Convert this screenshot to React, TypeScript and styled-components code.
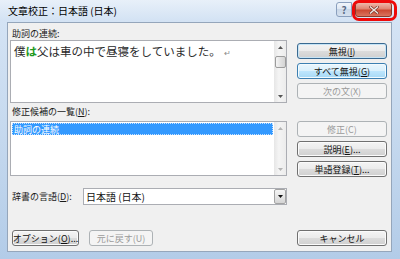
import React from 'react';
import styled, { createGlobalStyle, css } from 'styled-components';

const GlobalStyle = createGlobalStyle`
  html, body {
    margin: 0;
    padding: 0;
  }
  body {
    font-family: "Noto Sans CJK JP", "Noto Sans", sans-serif;
    background: #ffffff;
  }
`;

const Window = styled.div`
  width: 400px;
  height: 259px;
  box-sizing: border-box;
  display: flex;
  flex-direction: column;
  padding: 0 8px 7px 7px;
  background: linear-gradient(180deg, #e8f0f9 0px, #d4e3f4 20px, #c7daef 120px, #b3cce8 100%);
`;

const TitleBar = styled.div`
  position: relative;
  height: 22px;
  display: flex;
  align-items: flex-start;
`;

const Title = styled.div`
  font-size: 10px;
  line-height: 22px;
  color: #000;
  padding-left: 1px;
`;

const CaptionButtons = styled.div`
  margin-left: auto;
  margin-top: 2px;
  display: flex;
  gap: 3px;
`;

const CaptionButton = styled.div<{ $close?: boolean }>`
  height: 15px;
  box-sizing: border-box;
  display: flex;
  align-items: center;
  justify-content: center;
  ${({ $close }) =>
    $close
      ? css`
          width: 37px;
          border: 1px solid #8a3a2c;
          border-radius: 3px;
          background: linear-gradient(180deg, #eeb8ab 0%, #df8672 45%, #cc4a33 55%, #d9735e 100%);
        `
      : css`
          width: 16px;
          border: 1px solid #8a9fbd;
          border-radius: 3px 0 0 3px;
          background: linear-gradient(180deg, #f2f6fb 0%, #dce6f2 50%, #c9d7e8 50%, #d6e1ee 100%);
          font-size: 10px;
          font-weight: bold;
          color: #5a6b84;
        `}
`;

const Highlight = styled.div`
  position: absolute;
  left: 345px;
  top: 0;
  width: 45px;
  height: 21px;
  box-sizing: border-box;
  border: 3px solid #ee0a0a;
  border-radius: 7px;
`;

const Client = styled.div`
  flex: 1;
  display: flex;
  flex-direction: column;
  background: #f0f0f0;
  border: 1px solid #95a6bb;
  padding: 5px 4px 5px 2px;
`;

const Section = styled.div`
  display: grid;
  grid-template-columns: 277px 90px;
  column-gap: 10px;
`;

const Column = styled.div<{ $top?: number }>`
  display: flex;
  flex-direction: column;
  gap: 4px;
  padding-top: ${({ $top }) => $top ?? 0}px;
`;

const Stack = styled.div`
  display: flex;
  flex-direction: column;
`;

const Label = styled.div<{ $h: number }>`
  height: ${({ $h }) => $h}px;
  line-height: ${({ $h }) => $h}px;
  font-size: 9px;
  color: #1a1a1a;
  padding-left: 2px;
  white-space: nowrap;
`;

const Field = styled.div<{ $h: number }>`
  height: ${({ $h }) => $h}px;
  box-sizing: border-box;
  border: 1px solid #abadb3;
  background: #fff;
  display: flex;
`;

const FieldBody = styled.div`
  flex: 1;
  padding: 1px;
`;

const DocText = styled.div`
  font-size: 11.5px;
  line-height: 14px;
  color: #2a2a2a;
  padding: 2px 0 0 2px;
  white-space: nowrap;
`;

const Marked = styled.span`
  color: #1f9a1f;
  font-weight: bold;
`;

const ReturnMark = styled.span`
  color: #8a8a8a;
  font-size: 8px;
  margin-left: 3px;
`;

const ListItem = styled.div`
  height: 12px;
  line-height: 11px;
  font-size: 9px;
  color: #fff;
  background: #3399ff;
  padding-left: 1px;
  box-sizing: border-box;
  border: 1px dotted #c8e2ff;
`;

const ScrollBar = styled.div`
  width: 12px;
  display: flex;
  flex-direction: column;
  background: linear-gradient(90deg, #e6e6e6, #f4f4f4 40%, #ececec);
`;

const ScrollArrow = styled.div<{ $disabled?: boolean }>`
  height: 12px;
  display: flex;
  align-items: center;
  justify-content: center;
  color: ${({ $disabled }) => ($disabled ? '#b4b4b4' : '#555')};
`;

const ScrollTrack = styled.div`
  flex: 1;
  padding-top: 3px;
`;

const Thumb = styled.div`
  height: 12px;
  margin: 0 0 0 1px;
  box-sizing: border-box;
  border: 1px solid #9c9c9c;
  border-radius: 2px;
  background: linear-gradient(90deg, #f5f5f5, #e2e2e2 50%, #d4d4d4);
`;

type ButtonKind = 'normal' | 'default' | 'hot' | 'disabled';

const Button = styled.div<{ $kind?: ButtonKind; $w?: number }>`
  width: ${({ $w }) => ($w ? `${$w}px` : '100%')};
  height: 16px;
  box-sizing: border-box;
  border-radius: 3px;
  font-size: 9px;
  display: flex;
  align-items: center;
  justify-content: center;
  white-space: nowrap;
  color: #111;
  border: 1px solid #707070;
  background: linear-gradient(180deg, #f4f4f4 0%, #ebebeb 50%, #dcdcdc 50%, #d0d0d0 100%);
  box-shadow: inset 0 0 0 1px #fbfbfb;
  ${({ $kind }) =>
    $kind === 'default' &&
    css`
      border-color: #3a6a91;
      box-shadow: inset 0 0 0 1px #c6e4f6;
    `}
  ${({ $kind }) =>
    $kind === 'hot' &&
    css`
      border-color: #3c7fb1;
      background: linear-gradient(180deg, #eaf6fd 0%, #d9f0fc 50%, #bee6fd 50%, #a7d9f5 100%);
      box-shadow: inset 0 0 0 1px #f2fafe;
    `}
  ${({ $kind }) =>
    $kind === 'disabled' &&
    css`
      border-color: #adb2b5;
      background: #f4f4f4;
      box-shadow: none;
      color: #9a9a9a;
    `}
`;

const LangRow = styled.div`
  width: 277px;
  margin-top: 11px;
  display: flex;
  align-items: center;
`;

const Combo = styled.div`
  flex: 1;
  height: 17px;
  box-sizing: border-box;
  border: 1px solid #abadb3;
  background: #fff;
  display: flex;
  align-items: center;
`;

const ComboText = styled.div`
  flex: 1;
  font-size: 10px;
  color: #111;
  padding-left: 2px;
`;

const ComboButton = styled.div`
  width: 12px;
  height: 15px;
  box-sizing: border-box;
  border: 1px solid #a4a4a4;
  border-radius: 2px;
  background: linear-gradient(180deg, #f4f4f4 0%, #e6e6e6 50%, #d4d4d4 100%);
  display: flex;
  align-items: center;
  justify-content: center;
`;

const Footer = styled.div`
  margin-top: auto;
  display: flex;
  align-items: center;
  padding-left: 2px;
  gap: 10px;
`;

const Spacer = styled.div`
  flex: 1;
`;

const Arrow = ({ up, color = 'currentColor' }: { up?: boolean; color?: string }) => (
  <svg width="5" height="3" viewBox="0 0 5 3">
    <path d={up ? 'M0 3 L2.5 0 L5 3 Z' : 'M0 0 L5 0 L2.5 3 Z'} fill={color} />
  </svg>
);

const CloseGlyph = () => (
  <svg width="10" height="8" viewBox="0 0 10 8">
    <path d="M1.5 1 L8.5 7 M8.5 1 L1.5 7" stroke="#7a3326" strokeWidth="2.8" strokeLinecap="square" />
    <path d="M1.5 1 L8.5 7 M8.5 1 L1.5 7" stroke="#ece4e1" strokeWidth="1.5" strokeLinecap="square" />
  </svg>
);

const Scroll = ({ thumb, disabled }: { thumb?: boolean; disabled?: boolean }) => (
  <ScrollBar>
    <ScrollArrow $disabled={disabled}>
      <Arrow up />
    </ScrollArrow>
    <ScrollTrack>{thumb && <Thumb />}</ScrollTrack>
    <ScrollArrow $disabled={disabled}>
      <Arrow />
    </ScrollArrow>
  </ScrollBar>
);

export default function App() {
  return (
    <>
      <GlobalStyle />
      <Window>
        <TitleBar>
          <Title>文章校正：日本語 (日本)</Title>
          <CaptionButtons>
            <CaptionButton>?</CaptionButton>
            <CaptionButton $close>
              <CloseGlyph />
            </CaptionButton>
          </CaptionButtons>
          <Highlight />
        </TitleBar>
        <Client>
          <Section>
            <Stack>
              <Label $h={12}>助詞の連続:</Label>
              <Field $h={63}>
                <FieldBody>
                  <DocText>
                    僕<Marked>は</Marked>父は車の中で昼寝をしていました。
                    <ReturnMark>↵</ReturnMark>
                  </DocText>
                </FieldBody>
                <Scroll thumb />
              </Field>
            </Stack>
            <Column $top={15}>
              <Button $kind="default">
                無視(<u>I</u>)
              </Button>
              <Button $kind="hot">
                すべて無視(<u>G</u>)
              </Button>
              <Button $kind="disabled">次の文(X)</Button>
            </Column>
          </Section>
          <Section>
            <Stack>
              <Label $h={18}>
                修正候補の一覧(<u>N</u>):
              </Label>
              <Field $h={55}>
                <FieldBody>
                  <ListItem>助詞の連続</ListItem>
                </FieldBody>
                <Scroll disabled />
              </Field>
            </Stack>
            <Column $top={18}>
              <Button $kind="disabled">修正(C)</Button>
              <Button>
                説明(<u>E</u>)...
              </Button>
              <Button>
                単語登録(<u>T</u>)...
              </Button>
            </Column>
          </Section>
          <LangRow>
            <Label $h={17} style={{ width: 71 }}>
              辞書の言語(<u>D</u>):
            </Label>
            <Combo>
              <ComboText>日本語 (日本)</ComboText>
              <ComboButton>
                <Arrow color="#111" />
              </ComboButton>
            </Combo>
          </LangRow>
          <Footer>
            <Button $w={67}>
              オプション(<u>O</u>)...
            </Button>
            <Button $w={64} $kind="disabled">
              元に戻す(U)
            </Button>
            <Spacer />
            <Button $w={90}>キャンセル</Button>
          </Footer>
        </Client>
      </Window>
    </>
  );
}
